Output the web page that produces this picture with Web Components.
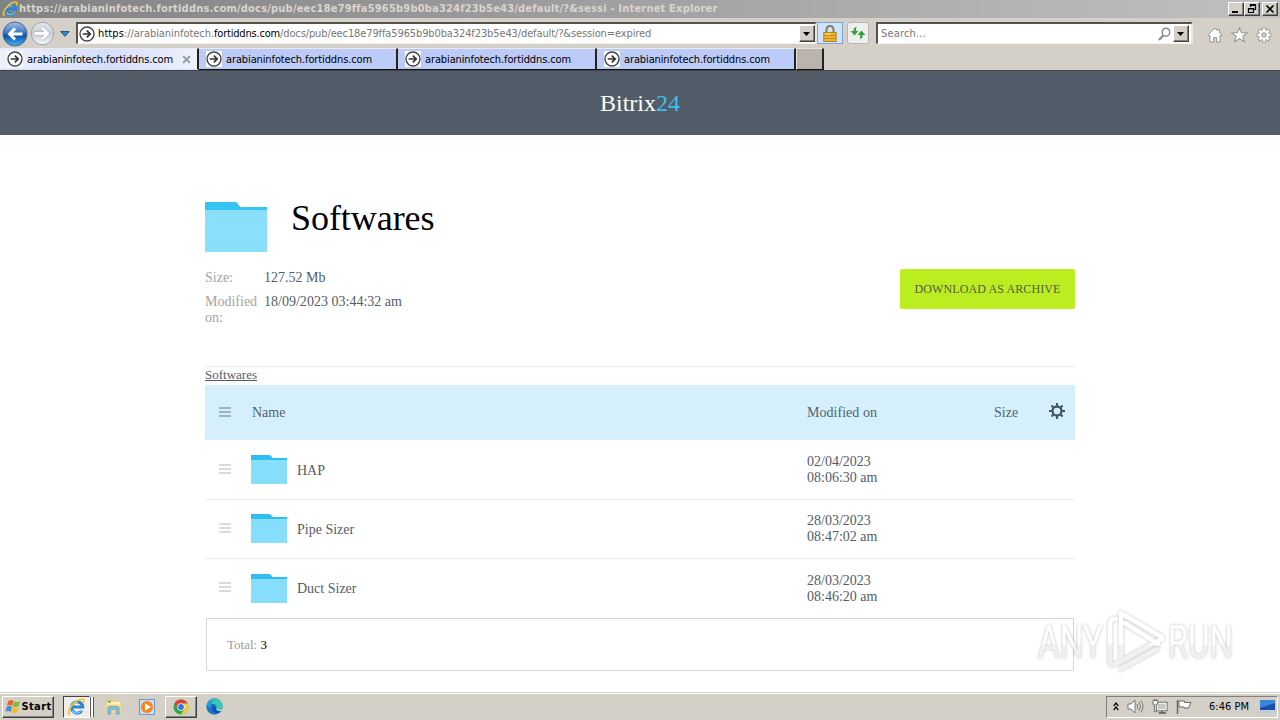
<!DOCTYPE html>
<html lang="en">
<head>
<meta charset="utf-8">
<title>Softwares</title>
<style>
html,body{margin:0;height:100%;overflow:hidden;background:#fff}
</style>
</head>
<body>
<desktop-screen></desktop-screen>
<script>
const define = (name, html, setup) => {
  const t = document.createElement('template');
  t.innerHTML = html;
  customElements.define(name, class extends HTMLElement {
    constructor() {
      super();
      this.attachShadow({mode: 'open'}).appendChild(t.content.cloneNode(true));
    }
    connectedCallback() { if (setup) setup(this, this.shadowRoot); }
  });
};

/* A single line of text, tracked to the width given in "w". */
define('ui-text', `<style>:host{display:inline-block;white-space:pre;flex:none}</style><slot></slot>`, el => {
  const w = +el.getAttribute('w');
  if (!w) return;
  el.style.letterSpacing = '0';
  const natural = el.getBoundingClientRect().width;
  if (natural) el.style.letterSpacing = ((w - natural) / el.textContent.length) + 'px';
});

const icons = {
  ie: ['0 0 20 20', `<path d="M16.500 14a6.300 6.300 0 1 1 1-4H6" fill="none" stroke="#2a86d2" stroke-width="3.400"/><path d="M16.200 13.700a6.200 6.200 0 0 1-10.500.6M5.500 8.500Q8 5 12 5.600" fill="none" stroke="#8ed5fa" stroke-width="1.300"/><path d="M3 18.500C-1 16 6 4.500 14 1.800c5-1.600 5.500 1.200 3.800 4" fill="none" stroke="#efc531" stroke-width="2"/>`],
  site: ['0 0 16 16', `<rect width="16" height="16" fill="#fff"/><circle cx="8" cy="8" r="7" fill="#fff" stroke="#444" stroke-width="1.400"/><path d="M3.700 8h7.300M7.800 4.600 11.200 8 7.800 11.400" fill="none" stroke="#333" stroke-width="1.700"/>`],
  back: ['0 0 26 26', `<defs><linearGradient id="g" x2="0" y2="1"><stop stop-color="#a5bfe2"/><stop offset=".45" stop-color="#3d78c4"/><stop offset=".55" stop-color="#0f4fa8"/><stop offset="1" stop-color="#45b2f7"/></linearGradient></defs><circle cx="13" cy="13" r="12" fill="url(#g)" stroke="#4c6590"/><path d="M20.500 13H8M13 7.500 7.500 13l5.500 5.500" fill="none" stroke="#fff" stroke-width="2.900"/>`],
  fwd: ['0 0 26 26', `<defs><linearGradient id="g" x2="0" y2="1"><stop stop-color="#e5e7e9"/><stop offset=".5" stop-color="#c9cdd3"/><stop offset="1" stop-color="#f6f8fa"/></linearGradient></defs><circle cx="13" cy="13" r="11.700" fill="url(#g)" stroke="#9aa2b0"/><path d="M5 13h13M12.500 7l6 6-6 6" fill="none" stroke="#a3a9b3" stroke-width="4"/><path d="M5 13h13M12.500 7l6 6-6 6" fill="none" stroke="#fff" stroke-width="2.900"/>`],
  bluedown: ['0 0 10 6', `<path d="M.8.6h8.400L5 5.300z" fill="#2793cf" stroke="#1b4e7b"/>`],
  down: ['0 0 8 4', `<path d="M0 0h7L3.500 4z" fill="#000"/>`],
  lock: ['0 0 14 17', `<path d="M3.500 8V4.500a3.500 3.500 0 0 1 7 0V8" fill="none" stroke="#887b58" stroke-width="2"/><rect x=".8" y="7.500" width="12.400" height="9" fill="#eeb32e" stroke="#b68321"/><path d="M1 10.500h12M1 13.500h12" stroke="#c18a1b"/><path d="M2 9h6" stroke="#ffe58a"/>`],
  refresh: ['0 0 16 14', `<path d="M.5 5h3.200V2.500l3-2-.7 2V5h2.500L4.500 9.500z" fill="#2fa439"/><path d="M7.500 9 11.500 4.500 15.500 9h-3v2.500l-3 2 .7-2V9z" fill="#2fa439"/>`],
  search: ['0 0 14 14', `<circle cx="8.600" cy="5.200" r="4" fill="none" stroke="#858a91" stroke-width="1.600"/><path d="M5.700 8.200 1 13" stroke="#858a91" stroke-width="2.300"/>`],
  home: ['0 0 16 16', `<path d="M8 1 .8 8l1 1.200L3 8.200V15h3.500v-4.500h3V15H13V8.200l1.200 1 1-1.200-2.700-2.500V2.500h-2v1.300z" fill="#fff" stroke="#999794"/>`],
  star: ['0 0 16 16', `<path d="m8 .8 2 5h5.300l-4.200 3.400 1.600 5.500L8 11.500l-4.700 3.200 1.600-5.500L.7 5.800H6z" fill="#fff" stroke="#999794"/>`],
  cog: ['0 0 16 16', `<path d="M8 .4v15.200M.4 8h15.200M2.600 2.600l10.800 10.800M13.400 2.600 2.600 13.400" stroke="#999794" stroke-width="3.600"/><circle cx="8" cy="8" r="5.600" fill="#999794"/><path d="M8 1.200v13.600M1.200 8h13.600M3.200 3.200l9.600 9.600M12.800 3.200l-9.600 9.600" stroke="#fff" stroke-width="2"/><circle cx="8" cy="8" r="4.900" fill="#fff"/><circle cx="8" cy="8" r="2.300" fill="#d4d0c8" stroke="#999794"/>`],
  close: ['0 0 8 8', `<path d="m1 1 6 6M7 1 1 7" stroke="#8f98a8" stroke-width="1.700"/>`],
  min: ['0 0 10 10', `<path d="M1 8h6" stroke="#000" stroke-width="2"/>`],
  restore: ['0 0 10 10', `<path d="M3.500 3V.5h5v5H6.500M3 1.500h6M1.500 4.500h5v4h-5zM1 5h6" fill="none" stroke="#000" stroke-width="1.200"/>`],
  x: ['0 0 10 10', `<path d="m1.500 1.500 7 7M8.500 1.500l-7 7" stroke="#000" stroke-width="1.600"/>`],
  folder: ['0 0 62 50', `<path d="M0 1q0-1 1-1h29q2 0 3 2l1 1.500q1 1.500 3 1.500h25v10H0z" fill="#36c3f3"/><path d="M0 8h62v41q0 1-1 1H1q-1 0-1-1z" fill="#8ae0fa"/>`],
  smallfolder: ['0 0 36 29', `<path d="M0 0h18q2 0 2.500 1.500.5 1.500 2 1.500H36v5H0z" fill="#2fbef2"/><path d="M0 5h36v24H0z" fill="#86defb"/>`],
  burger: ['0 0 12 10', `<path d="M0 1h12M0 5h12M0 9h12" stroke="currentColor" stroke-width="1.500"/>`],
  gear: ['0 0 16 16', `<path d="M8 0v16M0 8h16M2.400 2.400l11.200 11.200M13.600 2.400 2.400 13.600" stroke="#475665" stroke-width="2.100"/><circle cx="8" cy="8" r="4.500" fill="#d5f0fc" stroke="#475665" stroke-width="2.300"/>`],
  win: ['0 0 18 16', `<path d="M3.500 2q3-2 5.500 0L7.600 7.400q-2.500-1.800-5.500 0z" fill="#ed6129"/><path d="M9.800 2.400q3 1.600 6 0l-1.500 5.400q-3 1.500-5.900 0z" fill="#7dbb3a"/><path d="M1.900 8.300q3-1.800 5.500 0L6 13.600q-2.800-1.800-5.500 0z" fill="#448bd2"/><path d="M8.100 8.700q3 1.600 6 0l-1.500 5.400q-3 1.500-5.900 0z" fill="#f5bd28"/>`],
  explorer: ['0 0 18 18', `<path d="M1 3V1.500h6L8 3h8v6H1z" fill="#e8cd79"/><path d="M2 4h14v5H2z" fill="#fff1b8"/><path d="M3 3h3v2H3z" fill="#55ad62"/><path d="M1 7h16v9H1z" fill="#f0d983"/><path d="M3 17v-6q0-2 2-2h8q2 0 2 2v6h-3v-5H6v5z" fill="#82bce2" stroke="#5c9bc7" stroke-width=".7"/>`],
  media: ['0 0 16 16', `<rect x=".5" y=".5" width="15" height="15" fill="#c6def4" stroke="#6b9dcc"/><circle cx="8" cy="8" r="6" fill="#f4861d"/><path d="M6 4.300v7.400L11.800 8z" fill="#fff"/>`],
  chrome: ['0 0 16 16', `<circle cx="8" cy="8" r="7.500" fill="#2da94f"/><path d="M1.500 4.200 5 10 8 4.400h6.600A7.500 7.500 0 0 0 1.500 4.200z" fill="#e3402f"/><path d="M14.700 4.500A7.500 7.500 0 0 1 8 15.500l3.500-5.500L10 4.500z" fill="#fcc934"/><circle cx="8" cy="8" r="3.700" fill="#fff"/><circle cx="8" cy="8" r="2.900" fill="#2d75df"/>`],
  edge: ['0 0 16 16', `<circle cx="8" cy="8" r="7.700" fill="#1477c9"/><path d="M.4 7A7.700 7.700 0 0 1 15.700 8q-.2 3-3.300 3.100-3 0-3-1.300 1.200-1 .4-2.500Q8.500 5.300 5.500 5.500 2 5.500.4 7z" fill="#3dc7b0"/><path d="M.4 7Q2 1 8.500 2.300 4 3 4.300 9z" fill="#259edb"/><path d="M6.200 7.500q-1.800 4.700 3 6.500 3 .5 5.500-2-4 1.400-5.300-.8-1-1.600-.1-2.500z" fill="#0c529f"/><path d="M9.600 9.900q2 1.600 6 .7l-1.200 1.900q-4.300 0-4.800-2.600z" fill="#d4d0c8"/>`],
  chev: ['0 0 7 9', `<path d="m.8 4 2.700-3 2.700 3M.8 8l2.700-3 2.700 3" fill="none" stroke="#000" stroke-width="1.400"/>`],
  sound: ['0 0 17 15', `<path d="M1 5h3l4-4v13l-4-4H1z" fill="#fff" stroke="#777"/><path d="M10 5q1.500 2.500 0 5M12 3q3 4.500 0 9M14 1.500q4 6 0 12" fill="none" stroke="#777"/>`],
  net: ['0 0 17 16', `<path d="M4.500 3.500h11.500v9H4.500z" fill="#c9c7c3" stroke="#555"/><path d="M5.500 4.500h9.500v7H5.500z" fill="none" stroke="#fff"/><path d="M7 15h8M10.500 12.500V15" stroke="#555" stroke-width="1.500"/><path d="M1 1.500h5v4H4.500v8h-2v-8H1zM2.500 0v2M4.500 0v2" fill="#fff" stroke="#666"/>`],
  flag: ['0 0 16 16', `<path d="M3 2h5.500v1.500H15L12.500 9H8V8H3z" fill="#fff" stroke="#666"/><path d="M1.500 1v14" stroke="#666" stroke-width="1.500"/>`],
  desk: ['0 0 17 15', `<path d="M1 1h15v10H1z" fill="#164fa5"/><path d="M1 1h15v3L1 9z" fill="#3c86da"/><path d="M0 12h17v2H0z" fill="#b9cbe0"/>`]
};
define('ui-icon', `<style>:host{display:block;flex:none}svg{display:block;width:100%;height:100%}</style><svg></svg>`, (el, r) => {
  const [box, body] = icons[el.getAttribute('name')];
  const svg = r.querySelector('svg');
  svg.setAttribute('viewBox', box);
  svg.setAttribute('preserveAspectRatio', 'none');
  svg.innerHTML = body;
  el.style.width = el.getAttribute('w') + 'px';
  el.style.height = el.getAttribute('h') + 'px';
});

define('bevel-button', `<style>:host{display:flex;align-items:center;justify-content:center;box-sizing:border-box;flex:none;background:#d4d0c8;border:1px solid;border-color:#fff #404040 #404040 #fff;box-shadow:inset -1px -1px #808080}</style><slot></slot>`);

define('title-bar', `<style>:host{display:flex;height:18px;box-sizing:border-box;background:linear-gradient(90deg,#828282,#c0c0c0);color:#d8d5cf;font:bold 11px/18px "DejaVu Sans Condensed","DejaVu Sans",sans-serif;align-items:center;padding:0 2px 0 2px}
ui-icon{margin-right:1px}.b{display:flex;margin-left:auto}bevel-button{width:16px;height:14px}bevel-button:last-child{margin-left:2px}</style>
<ui-icon name="ie" w="16" h="16"></ui-icon><ui-text w="698">https://arabianinfotech.fortiddns.com/docs/pub/eec18e79ffa5965b9b0ba324f23b5e43/default/?&amp;sessi - Internet Explorer</ui-text>
<div class="b"><bevel-button><ui-icon name="min" w="10" h="10"></ui-icon></bevel-button><bevel-button><ui-icon name="restore" w="10" h="10"></ui-icon></bevel-button><bevel-button><ui-icon name="x" w="10" h="10"></ui-icon></bevel-button></div>`);

define('nav-bar', `<style>:host{display:flex;height:30px;box-sizing:border-box;background:#d4d0c8;align-items:center;padding:0 8px 0 2px;font:11px/16px "DejaVu Sans Condensed","DejaVu Sans",sans-serif;color:#777}
.nav{display:flex;align-items:center;height:27px;margin-top:1px;width:74px}.nav ui-icon+ui-icon{margin-left:2px}.nav ui-icon[name=bluedown]{margin-left:5px}
.field{display:flex;align-items:center;box-sizing:border-box;height:22px;background:#fff;border:2px solid;border-color:#55524d #e9e6e0 #f4f2ee #55524d;border-bottom-width:1px}
.addr{width:741px;padding-left:1px}.addr .u{margin-left:3px}.search{width:317px;margin-left:7px;padding-left:3px}.field bevel-button{width:16px;height:17px;margin-left:auto}
.search ui-icon[name=search]{margin-left:auto}.search bevel-button{margin:0 2px 0 2px}
.k{color:#000}.lock{box-sizing:border-box;width:26px;height:22px;background:#cfe4fb;border:1px solid #7aa8dc;display:grid;place-items:center}
.ref{box-sizing:border-box;width:22px;height:22px;margin-left:4px;background:#edf0ee;border:1px solid #b5b8bb;border-radius:3px;display:grid;place-items:center}
.r{display:flex;gap:8px;margin:3px 0 0 auto}.u{display:flex}</style>
<div class="nav"><ui-icon name="back" w="26" h="26"></ui-icon><ui-icon name="fwd" w="25" h="25"></ui-icon><ui-icon name="bluedown" w="10" h="6"></ui-icon></div>
<div class="field addr"><ui-icon name="site" w="16" h="16"></ui-icon><span class="u"><ui-text class="k" w="26">https</ui-text><ui-text w="90">://arabianinfotech.</ui-text><ui-text class="k" w="66">fortiddns.com</ui-text><ui-text w="371">/docs/pub/eec18e79ffa5965b9b0ba324f23b5e43/default/?&amp;session=expired</ui-text></span><bevel-button><ui-icon name="down" w="8" h="4"></ui-icon></bevel-button></div>
<div class="lock"><ui-icon name="lock" w="14" h="17"></ui-icon></div><div class="ref"><ui-icon name="refresh" w="16" h="14"></ui-icon></div>
<div class="field search"><ui-text w="45">Search...</ui-text><ui-icon name="search" w="13" h="14"></ui-icon><bevel-button><ui-icon name="down" w="8" h="4"></ui-icon></bevel-button></div>
<div class="r"><ui-icon name="home" w="16" h="16"></ui-icon><ui-icon name="star" w="17" h="16"></ui-icon><ui-icon name="cog" w="16" h="16"></ui-icon></div>`);

define('browser-tab', `<style>:host{display:flex;align-items:center;box-sizing:border-box;width:199px;height:22px;padding:0 6px 0 7px;background:#bccbf8;border-right:2px solid #222;border-top:1px solid #e8ebf5;border-bottom:1px solid #111}
:host([active]){background:linear-gradient(90deg,#edf1fc,#d5def8 55%,#eef2fc);border-bottom-color:#d5def8}
ui-text{margin-left:4px;margin-top:1px}.c{margin-left:auto;display:none}:host([active]) .c{display:block}</style>
<ui-icon name="site" w="16" h="16"></ui-icon><ui-text w="146">arabianinfotech.fortiddns.com</ui-text><ui-icon class="c" name="close" w="9" h="9"></ui-icon>`);
define('tab-strip', `<style>:host{display:flex;height:23px;box-sizing:border-box;background:#d4d0c8;border-bottom:1px solid #444;font:11px/18px "DejaVu Sans Condensed","DejaVu Sans",sans-serif;color:#000}
i{box-sizing:border-box;width:28px;height:22px;background:#bbb4ac;border:1px solid #e4e0da;border-right:2px solid #222;border-bottom-color:#111}</style>
<browser-tab active></browser-tab><browser-tab></browser-tab><browser-tab></browser-tab><browser-tab></browser-tab><i></i>`);

define('site-header', `<style>:host{display:flex;height:64px;background:#535c69;color:#fff;justify-content:center;align-items:center;font-size:24px;line-height:28px}span{color:#39c2ee}</style><ui-text>Bitrix<span>24</span></ui-text>`);

define('file-summary', `<style>:host{display:block;height:232px;box-sizing:border-box;padding-top:63px;border-bottom:1px solid #eee}
.t{display:flex;height:57px}.t ui-icon{margin-top:4px}.t ui-text{font-size:36px;line-height:40px;margin-left:24px;color:#000}
.m{display:flex;justify-content:space-between;margin-top:14px;height:60px}
dl{display:grid;grid-template-columns:59px auto;row-gap:8px;margin:1px 0 0;font-size:14px;line-height:16px;align-content:start}
dt{color:#a2a4a8}dd{margin:0;color:#535c69}
.b{box-sizing:border-box;width:175px;height:40px;border-radius:2px;background:#bbed21;color:#535c45;font-size:12px;display:grid;place-items:center}</style>
<div class="t"><ui-icon name="folder" w="62" h="50"></ui-icon><ui-text w="143.500">Softwares</ui-text></div>
<div class="m"><dl><dt>Size:</dt><dd><ui-text w="61.500">127.52 Mb</ui-text></dd><dt>Modified<br>on:</dt><dd><ui-text w="138">18/09/2023 03:44:32 am</ui-text></dd></dl><div class="b"><ui-text w="146">DOWNLOAD AS ARCHIVE</ui-text></div></div>`);

define('file-row', `<style>:host{display:grid;grid-template-columns:46px 46px 510px 1fr;align-items:start;height:59px;box-sizing:border-box;border-bottom:1px solid #eee;font-size:14px;line-height:16px;color:#535c69;padding-top:14px}
:host([first]){height:60px;padding-top:15px}
:host([last]){border-color:transparent;padding-top:15px}
.h{color:#cfd0d2;margin:9px 0 0 14px}:host([last]) .h{margin-top:8px}.n{margin-top:8px}:host([last]) .n{margin-top:7px}.d{margin-top:-1px}</style>
<ui-icon class="h" name="burger" w="12" h="10"></ui-icon><ui-icon name="smallfolder" w="36" h="29"></ui-icon><span class="n"><slot></slot></span><span class="d"><slot name="date"></slot><br><slot name="time"></slot></span>`);

define('file-table', `<style>:host{display:block;color:#535c69;font-size:14px;line-height:16px}
.c{height:18px;font-size:13px;line-height:16px}.c ui-text{text-decoration:underline}
.hd{display:grid;grid-template-columns:47px 555px 187px 55px 1fr;height:55px;background:#d5f0fc;align-items:center;color:#525f70}
.hd>:first-child{margin-left:14px;margin-top:-1px;color:#8e9faa}.hd>:last-child{margin-top:-3px}
.f{box-sizing:border-box;height:53px;margin:0 1px;border:1px solid #d6d6d6;padding-left:20px;display:flex;align-items:center;font-size:13px;color:#999;white-space:pre}.f b{font-weight:normal;color:#000}
.hd ui-text{justify-self:start}</style>
<div class="c"><ui-text w="52">Softwares</ui-text></div>
<div class="hd"><ui-icon name="burger" w="12" h="10"></ui-icon><ui-text>Name</ui-text><ui-text w="70">Modified on</ui-text><ui-text>Size</ui-text><ui-icon name="gear" w="16" h="16"></ui-icon></div>
<file-row first>HAP<span slot="date">02/04/2023</span><span slot="time">08:06:30 am</span></file-row>
<file-row>Pipe Sizer<span slot="date">28/03/2023</span><span slot="time">08:47:02 am</span></file-row>
<file-row last>Duct Sizer<span slot="date">28/03/2023</span><span slot="time">08:46:20 am</span></file-row>
<div class="f">Total: <b>3</b></div>`);

define('task-bar', `<style>:host{display:flex;height:28px;box-sizing:border-box;background:#d4d0c8;border-top:1px solid #d4d0c8;box-shadow:inset 0 1px #fff;align-items:center;padding:0 2px;font:11px/18px "DejaVu Sans Condensed","DejaVu Sans",sans-serif;color:#000}
.s{width:52px;height:22px;font-weight:bold;gap:0}.ie{width:27px;height:22px;box-sizing:border-box;margin-left:9px;border:1px solid;border-color:#444 #fff #fff #444;background:#efede9;display:flex;align-items:center;padding-left:3px}
.g{width:4px;height:20px;border-right:1px solid #555;border-left:1px solid #555;box-sizing:border-box;background:#fff}
.a{margin-left:11px}.md{margin-left:17px}.ch{width:32px;height:22px;margin-left:10px}.ed{margin-left:9px}
.tray{display:flex;align-items:center;box-sizing:border-box;width:172px;height:22px;margin-left:auto;border:1px solid;border-color:#808080 #fff #fff #808080;padding:0 1px 0 6px}
.tray ui-icon+ui-icon{margin-left:8px}.tray ui-text{margin-left:17px}.tray ui-icon:last-child{margin-left:auto}</style>
<bevel-button class="s"><ui-icon name="win" w="17" h="15"></ui-icon><ui-text w="30">Start</ui-text></bevel-button>
<div class="ie"><ui-icon name="ie" w="18" h="18"></ui-icon></div><div class="g"></div>
<ui-icon class="a" name="explorer" w="17" h="17"></ui-icon><ui-icon class="md" name="media" w="16" h="16"></ui-icon>
<bevel-button class="ch"><ui-icon name="chrome" w="16" h="16"></ui-icon></bevel-button><ui-icon class="ed" name="edge" w="17" h="17"></ui-icon>
<div class="tray"><ui-icon name="chev" w="6" h="9"></ui-icon><ui-icon name="sound" w="17" h="15"></ui-icon><ui-icon name="net" w="16" h="15"></ui-icon><ui-icon name="flag" w="16" h="16"></ui-icon><ui-text w="40">6:46 PM</ui-text><ui-icon name="desk" w="17" h="15"></ui-icon></div>`);

define('any-run-mark', `<style>:host{position:absolute;left:1032px;top:604px;width:206px;height:74px;display:flex;filter:drop-shadow(0 0 1.500px rgba(0,0,0,.25))}svg{width:206px;height:74px;overflow:visible}text{font:400 46px Roboto,"Liberation Sans",sans-serif}</style>
<svg viewBox="0 0 206 74"><defs><linearGradient id="f" gradientUnits="userSpaceOnUse" x1="0" y1="20" x2="0" y2="60"><stop offset=".5" stop-color="#fff"/><stop offset=".55" stop-color="#f1f1f1"/></linearGradient></defs><g fill="url(#f)"><text x="6" y="54" textLength="65" lengthAdjust="spacingAndGlyphs">ANY</text><text x="136" y="54" textLength="65" lengthAdjust="spacingAndGlyphs">RUN</text></g>
<g fill="none" stroke="url(#f)" stroke-width="4.500" stroke-linejoin="round" stroke-linecap="round"><path d="M84 15q-6-1-6 5v38q0 4 5 2l6-3"/><path d="M89 55V9l41 24M93 19l33 21M89 57l41-22M89 65l36-20"/></g></svg>`);

define('desktop-screen', `<style>:host{display:flex;flex-direction:column;width:1280px;height:720px;overflow:hidden;position:relative;background:#fff;font-family:"Liberation Serif",serif}
title-bar,nav-bar,tab-strip,site-header,task-bar{flex:none}
main{flex:1 1 0;min-height:0;width:870px;margin:0 auto;overflow:hidden}</style>
<title-bar></title-bar><nav-bar></nav-bar><tab-strip></tab-strip><site-header></site-header>
<main><file-summary></file-summary><file-table></file-table></main>
<task-bar></task-bar><any-run-mark></any-run-mark>`);
</script>
</body>
</html>
